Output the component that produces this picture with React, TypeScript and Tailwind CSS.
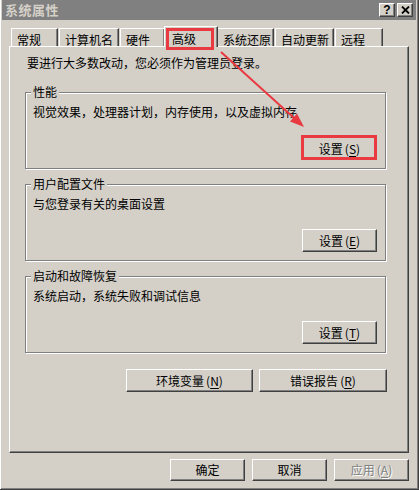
const raised =
  "bg-[#d4d0c8] border border-t-white border-l-white border-r-[#404040] border-b-[#404040] shadow-[inset_-1px_-1px_0_#808080]";

const tabs = [
  { label: "常规", cls: "w-[47px]" },
  { label: "计算机名", cls: "w-[60px]" },
  { label: "硬件", cls: "w-[45px]" },
  { label: "高级", cls: "w-[54px]", active: true },
  { label: "系统还原", cls: "w-[57px]" },
  { label: "自动更新", cls: "w-[59px]" },
  { label: "远程", cls: "w-[48px]" },
];

function Btn({
  children,
  className = "",
  disabled,
  marked,
}: {
  children: React.ReactNode;
  className?: string;
  disabled?: boolean;
  marked?: boolean;
}) {
  return (
    <div
      className={`relative flex items-center justify-center leading-[14px] ${raised} ${
        disabled ? "text-[#808080] [text-shadow:1px_1px_0_white]" : "text-black"
      } ${className}`}
    >
      {children}
      {marked && (
        <div className="absolute -left-[2px] -top-[3px] right-[-1px] bottom-[-1px] border-[3px] border-[#e83a40]" />
      )}
    </div>
  );
}

function Acc({ k }: { k: string }) {
  return (
    <span className="ml-[2px]">
      (<span className="underline underline-offset-2">{k}</span>)
    </span>
  );
}

function Group({
  title,
  text,
  accel,
  marked,
  className = "",
}: {
  title: string;
  text: string;
  accel: string;
  marked?: boolean;
  className?: string;
}) {
  return (
    <div
      className={`relative flex flex-col h-[77px] w-[361px] border border-[#808080] shadow-[inset_1px_1px_0_white,1px_1px_0_white] ${className}`}
    >
      <div className="absolute left-[5px] top-[-9px] px-[2px] bg-[#d4d0c8] leading-[16px]">{title}</div>
      <div className="pt-[11px] pl-[7px] leading-[16px]">{text}</div>
      <div className="flex-1" />
      <div className="flex justify-end pr-[8px] pb-[8px]">
        <Btn className="w-[75px] h-[23px]" marked={marked}>
          设置
          <Acc k={accel} />
        </Btn>
      </div>
    </div>
  );
}

export default function App() {
  return (
    <div className="relative flex flex-col w-[419px] h-[490px] bg-[#d4d0c8] px-[2px] pb-[2px] border-r border-b border-[#404040] shadow-[inset_1px_0_0_white,inset_-1px_-1px_0_#808080] font-['Noto_Sans_CJK_SC','Noto_Sans',sans-serif] text-[12px] text-black overflow-hidden">
      {/* title bar */}
      <div className="flex items-center justify-between h-[20px] bg-[#808080] pl-[3px] pr-[3px]">
        <span className="text-[13px] font-bold text-[#d4d0c8] leading-[16px] tracking-[0.5px]">系统属性</span>
        <div className="flex gap-[2px]">
          <div className={`flex items-center justify-center w-[16px] h-[14px] ${raised}`}>
            <span className="font-['Liberation_Sans',sans-serif] font-bold text-[12px] leading-[12px]">?</span>
          </div>
          <div className={`flex items-center justify-center w-[16px] h-[14px] ${raised}`}>
            <svg width="9" height="8" viewBox="0 0 9 8">
              <path d="M1 0.5 L8 7.5 M8 0.5 L1 7.5" stroke="black" strokeWidth="1.8" />
            </svg>
          </div>
        </div>
      </div>

      <div className="flex flex-1 flex-col px-[7px] pt-[6px] pb-[6px]">
        {/* tabs */}
        <div className="flex items-end gap-[1px] h-[20px] pl-[2px]">
          {tabs.map((t) =>
            t.active ? (
              <div
                key={t.label}
                className={`relative z-10 -mx-[2px] mb-[-1px] h-[21px] pl-[7px] pt-[5px] leading-[14px] bg-[#d4d0c8] border-t border-l border-r border-t-white border-l-white border-r-[#404040] shadow-[inset_-1px_0_0_#808080] ${t.cls}`}
              >
                {t.label}
                <div className="absolute left-[1px] top-[1px] w-[48px] h-[22px] border-[3px] border-[#e83a40]" />
              </div>
            ) : (
              <div
                key={t.label}
                className={`h-[18px] pl-[5px] pt-[4px] leading-[14px] border-t border-l border-r border-t-white border-l-white border-r-[#404040] shadow-[inset_-1px_0_0_#808080] ${t.cls}`}
              >
                {t.label}
              </div>
            )
          )}
        </div>

        {/* panel */}
        <div className={`flex flex-1 flex-col ${raised}`}>
          <div className="pt-[8px] pl-[17px] leading-[16px]">要进行大多数改动，您必须作为管理员登录。</div>
          <div className="flex flex-col ml-[15px]">
            <Group className="mt-[21px]" title="性能" text="视觉效果，处理器计划，内存使用，以及虚拟内存" accel="S" marked />
            <Group className="mt-[15px]" title="用户配置文件" text="与您登录有关的桌面设置" accel="E" />
            <Group className="mt-[15px]" title="启动和故障恢复" text="系统启动，系统失败和调试信息" accel="T" />
            <div className="flex justify-end gap-[6px] w-[362px] mt-[16px]">
              <Btn className="w-[127px] h-[23px]">
                环境变量
                <Acc k="N" />
              </Btn>
              <Btn className="w-[128px] h-[23px]">
                错误报告
                <Acc k="R" />
              </Btn>
            </div>
          </div>
        </div>

        {/* dialog buttons */}
        <div className="flex justify-end gap-[7px] mt-[6px]">
          <Btn className="w-[75px] h-[22px]">确定</Btn>
          <Btn className="w-[75px] h-[22px]">取消</Btn>
          <Btn className="w-[75px] h-[22px]" disabled>
            应用
            <Acc k="A" />
          </Btn>
        </div>
      </div>

      {/* annotation arrow */}
      <svg className="absolute left-0 top-0 pointer-events-none" width="419" height="490">
        <line x1="221" y1="52" x2="294" y2="118" stroke="#e83a40" strokeWidth="2" />
        <polygon points="304,127 290,121.5 297,113.5" fill="#e83a40" />
      </svg>
    </div>
  );
}
